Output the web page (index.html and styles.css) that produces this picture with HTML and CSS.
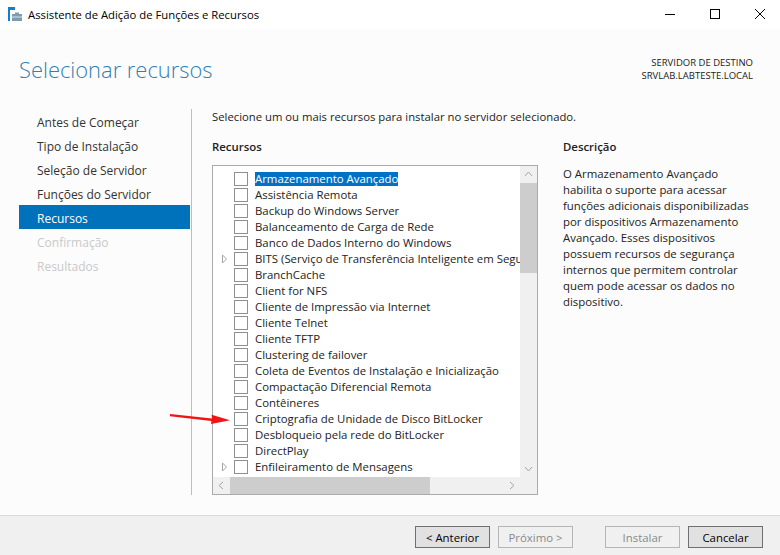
FILE: index.html
```html
<!DOCTYPE html>
<html lang="pt">
<head>
<meta charset="utf-8">
<title>Assistente de Adição de Funções e Recursos</title>
<link rel="stylesheet" href="styles.css">
</head>
<body>
<div class="window">
  <header class="titlebar">
    <svg class="app-icon" width="15" height="15" viewBox="0 0 15 15"><rect x="0" y="0" width="2" height="14" fill="#0f7fd0"/><rect x="0" y="0" width="7" height="3" fill="#0f7fd0"/><path d="M4 7h3V5.5h4V7h3v7H4z" fill="#7f9bb0"/><rect x="4" y="9.5" width="10" height="1" fill="#d8e2ea"/></svg>
    <span class="window-title">Assistente de Adição de Funções e Recursos</span>
    <div class="window-controls">
      <svg width="10" height="10" viewBox="0 0 10 10"><path d="M0 5.5h10" stroke="#000" fill="none"/></svg>
      <svg width="10" height="10" viewBox="0 0 10 10"><rect x=".5" y=".5" width="9" height="9" stroke="#000" fill="none"/></svg>
      <svg width="10" height="10" viewBox="0 0 10 10"><path d="M0 0l10 10M10 0L0 10" stroke="#000" fill="none"/></svg>
    </div>
  </header>
  <main class="content">
    <div class="page-head">
      <h1>Selecionar recursos</h1>
      <div class="server">SERVIDOR DE DESTINO<br>SRVLAB.LABTESTE.LOCAL</div>
    </div>
    <div class="page-body">
      <nav class="steps">
        <a>Antes de Começar</a>
        <a>Tipo de Instalação</a>
        <a>Seleção de Servidor</a>
        <a>Funções do Servidor</a>
        <a class="active">Recursos</a>
        <a class="disabled">Confirmação</a>
        <a class="disabled">Resultados</a>
      </nav>
      <section class="panel">
        <p class="intro">Selecione um ou mais recursos para instalar no servidor selecionado.</p>
        <div class="columns">
          <div class="features">
            <h2>Recursos</h2>
            <div class="listbox">
              <ul class="tree">
                <li><i class="exp"></i><i class="chk"></i><span class="sel">Armazenamento Avançado</span></li>
                <li><i class="exp"></i><i class="chk"></i><span>Assistência Remota</span></li>
                <li><i class="exp"></i><i class="chk"></i><span>Backup do Windows Server</span></li>
                <li><i class="exp"></i><i class="chk"></i><span>Balanceamento de Carga de Rede</span></li>
                <li><i class="exp"></i><i class="chk"></i><span>Banco de Dados Interno do Windows</span></li>
                <li><i class="exp"><svg width="7" height="10" viewBox="0 0 7 10"><path d="M1.5 1l4 4-4 4z" fill="none" stroke="#a6a6a6"/></svg></i><i class="chk"></i><span>BITS (Serviço de Transferência Inteligente em Segundo Plano)</span></li>
                <li><i class="exp"></i><i class="chk"></i><span>BranchCache</span></li>
                <li><i class="exp"></i><i class="chk"></i><span>Client for NFS</span></li>
                <li><i class="exp"></i><i class="chk"></i><span>Cliente de Impressão via Internet</span></li>
                <li><i class="exp"></i><i class="chk"></i><span>Cliente Telnet</span></li>
                <li><i class="exp"></i><i class="chk"></i><span>Cliente TFTP</span></li>
                <li><i class="exp"></i><i class="chk"></i><span>Clustering de failover</span></li>
                <li><i class="exp"></i><i class="chk"></i><span>Coleta de Eventos de Instalação e Inicialização</span></li>
                <li><i class="exp"></i><i class="chk"></i><span>Compactação Diferencial Remota</span></li>
                <li><i class="exp"></i><i class="chk"></i><span>Contêineres</span></li>
                <li><i class="exp"></i><i class="chk"></i><span>Criptografia de Unidade de Disco BitLocker</span></li>
                <li><i class="exp"></i><i class="chk"></i><span>Desbloqueio pela rede do BitLocker</span></li>
                <li><i class="exp"></i><i class="chk"></i><span>DirectPlay</span></li>
                <li><i class="exp"><svg width="7" height="10" viewBox="0 0 7 10"><path d="M1.5 1l4 4-4 4z" fill="none" stroke="#a6a6a6"/></svg></i><i class="chk"></i><span>Enfileiramento de Mensagens</span></li>
              </ul>
              <div class="vbar">
                <svg class="sb-btn" width="17" height="17" viewBox="0 0 17 17"><path d="M5 10l3.5-4 3.5 4" fill="none" stroke="#a6a6a6"/></svg>
                <div class="vtrack"><div class="vthumb"></div></div>
                <svg class="sb-btn" width="17" height="17" viewBox="0 0 17 17"><path d="M5 7l3.5 4 3.5-4" fill="none" stroke="#a6a6a6"/></svg>
              </div>
              <div class="hbar">
                <svg class="sb-btn" width="17" height="17" viewBox="0 0 17 17"><path d="M10 5L6 8.5l4 3.5" fill="none" stroke="#a6a6a6"/></svg>
                <div class="htrack"><div class="hthumb"></div></div>
                <svg class="sb-btn" width="17" height="17" viewBox="0 0 17 17"><path d="M7 5l4 3.5L7 12" fill="none" stroke="#a6a6a6"/></svg>
              </div>
              <div class="corner"></div>
            </div>
          </div>
          <aside class="description">
            <h2>Descrição</h2>
            <p>O Armazenamento Avançado habilita o suporte para acessar funções adicionais disponibilizadas por dispositivos Armazenamento Avançado. Esses dispositivos possuem recursos de segurança internos que permitem controlar quem pode acessar os dados no dispositivo.</p>
          </aside>
        </div>
      </section>
    </div>
  </main>
  <footer class="footer">
    <button class="btn dark">&lt; Anterior</button>
    <button class="btn off">Próximo &gt;</button>
    <button class="btn off install">Instalar</button>
    <button class="btn dark">Cancelar</button>
  </footer>
  <svg class="arrow" width="64" height="14" viewBox="0 0 64 14"><path d="M0 2l42 4.4-.4-3.6L60 8.2l-19 3.8.4-3L0 4.2z" fill="#f01414"/></svg>
</div>
</body>
</html>
```
FILE: styles.css
```css
* { box-sizing: border-box; }
html, body { margin: 0; padding: 0; }
body { font-family: "Open Sans", "Noto Sans", sans-serif; font-size: 12px; color: #222; }
.window { position: relative; width: 780px; height: 555px; display: flex; flex-direction: column; background: #fcfcfc; overflow: hidden; }
.titlebar { height: 30px; background: #fff; display: flex; align-items: center; padding-left: 8px; flex: none; }
.app-icon { margin-right: 5px; margin-bottom: 1px; }
.window-title { color: #000; font-size: 11.3px; line-height: 14px; }
.window-controls { margin-left: auto; display: flex; gap: 35px; padding-right: 15px; margin-bottom: 2px; }
.content { flex: 1; display: flex; flex-direction: column; min-height: 0; }
.page-head { height: 79px; padding: 23px 27px 0 19px; display: flex; justify-content: space-between; flex: none; }
h1 { margin: 0; font-size: 21.9px; font-weight: 300; color: #2e7fb3; line-height: 34px; }
.server { text-align: right; font-size: 9.5px; line-height: 13px; color: #222; padding-top: 3px; }
.page-body { display: flex; flex: 1; min-height: 0; }
.steps { width: 171px; margin-left: 19px; flex: none; display: flex; flex-direction: column; }
.steps a { height: 24px; line-height: 28px; padding-left: 18px; font-size: 12px; color: #333; }
.steps .active { background: #0072bc; color: #fff; }
.steps .disabled { color: #c9c9c9; }
.panel { margin-left: 1px; margin-bottom: 20px; border-left: 1px solid #bdbdbd; padding-left: 20px; flex: 1; }
.intro { margin: 0; height: 30px; line-height: 16px; font-size: 11.3px; color: #222; }
.columns { display: flex; }
.features { width: 326px; flex: none; }
h2 { margin: 0; font-size: 11.4px; font-weight: 600; line-height: 16px; height: 26px; color: #222; }
.listbox { width: 326px; height: 330px; border: 1px solid #ababab; background: #fff; display: grid; grid-template-columns: 307px 17px; grid-template-rows: 311px 17px; }
.tree { list-style: none; margin: 0; padding: 5px 0 0; overflow: hidden; }
.tree li { height: 16px; display: flex; align-items: center; white-space: nowrap; font-size: 11.4px; color: #222; }
.exp { width: 21px; flex: none; padding-left: 8px; display: flex; font-style: normal; }
.chk { width: 14px; height: 14px; border: 1px solid #8f8f8f; background: #fff; flex: none; margin-right: 7px; }
.tree span { line-height: 14px; }
.tree .sel { background: #0072c6; color: #fff; }
.vbar { background: #f0f0f0; display: flex; flex-direction: column; }
.vtrack { flex: 1; }
.vthumb { height: 90px; background: #cdcdcd; }
.hbar { background: #f0f0f0; display: flex; }
.htrack { flex: 1; }
.hthumb { width: 200px; height: 17px; background: #cdcdcd; }
.corner { background: #f0f0f0; }
.sb-btn { flex: none; display: block; }
.description { margin-left: 25px; width: 190px; }
.description p { margin: 1px 0 0; line-height: 16px; font-size: 11.4px; color: #222; }
.footer { height: 40px; flex: none; background: #f0f0f0; border-top: 1px solid #dcdcdc; display: flex; align-items: flex-start; padding: 10px 0 0 415px; gap: 8px; }
.btn { width: 75px; height: 22px; font: 11.4px "Open Sans", sans-serif; padding: 0; color: #000; }
.btn.dark { background: #e1e1e1; border: 1px solid #6f6f6f; }
.btn.off { background: #f0f0f0; border: 1px solid #b5b5b5; color: #8a8a8a; }
.install { margin-left: 24px; }
.arrow { position: absolute; left: 170px; top: 412px; }
```
